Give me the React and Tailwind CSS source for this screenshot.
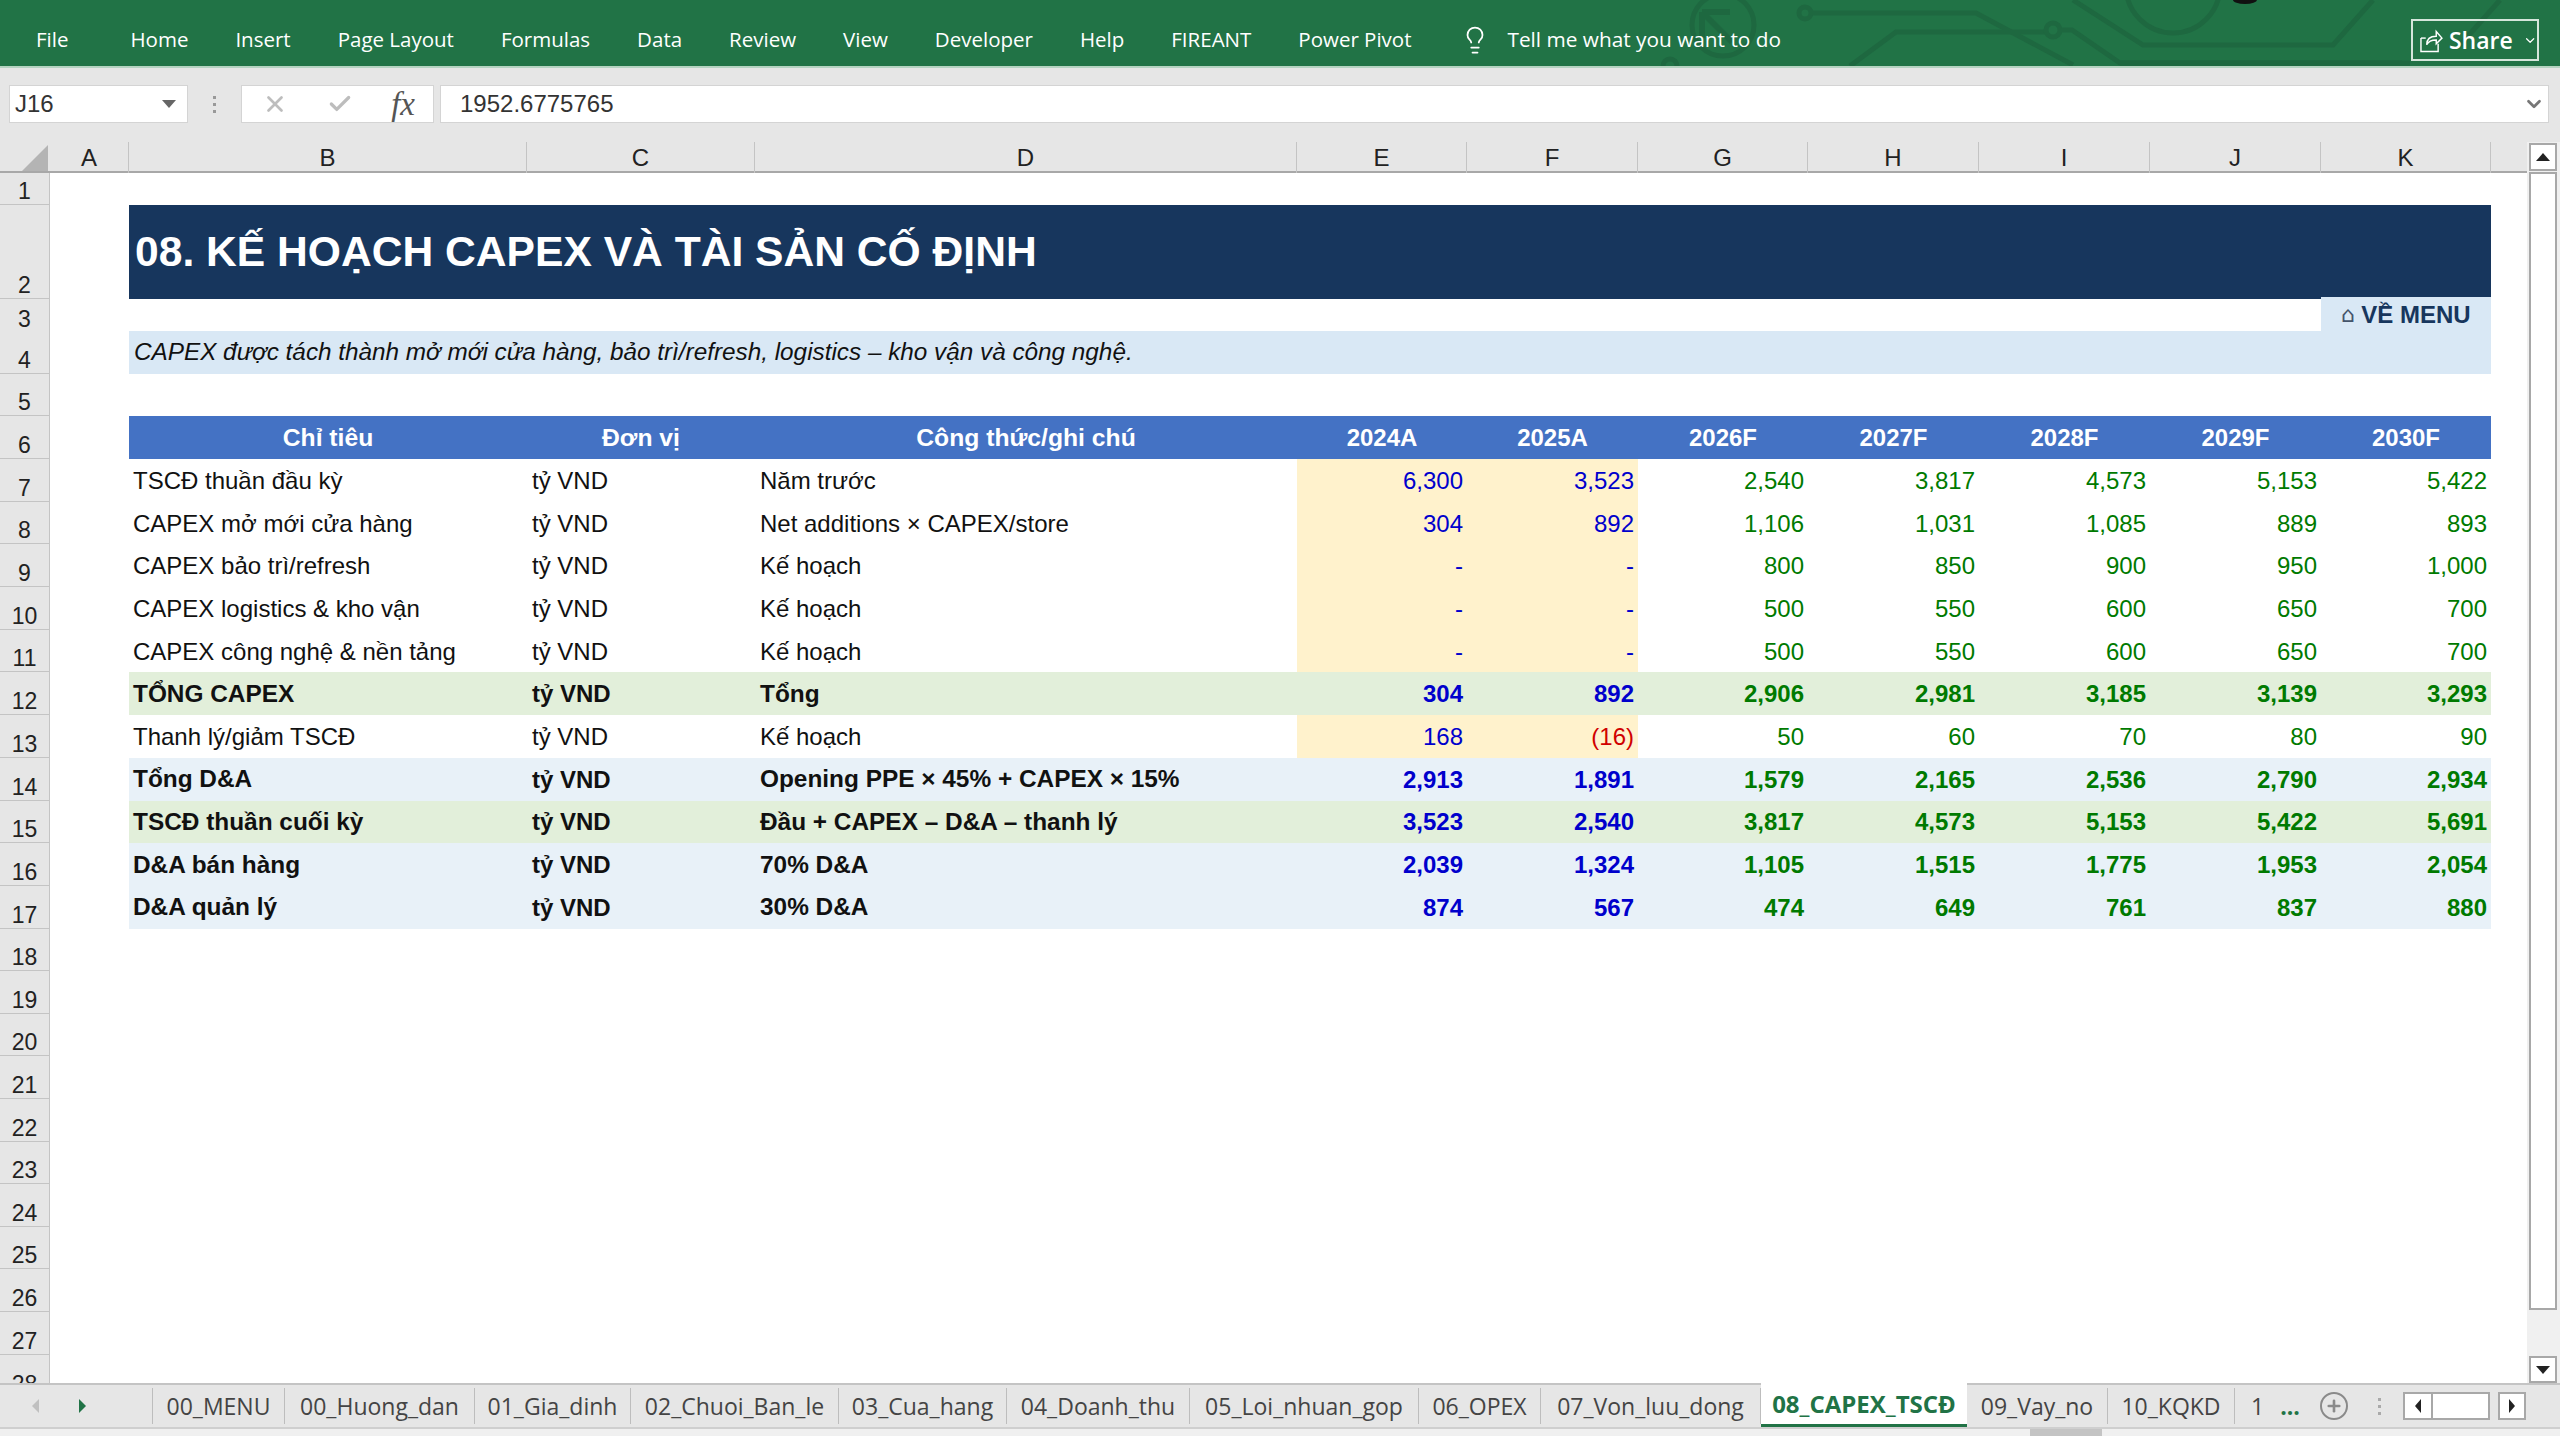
import { Check, ChevronDown, Lightbulb, Plus, X } from 'lucide-react';

const ribbonTabs = ['Home', 'Insert', 'Page Layout', 'Formulas', 'Data', 'Review', 'View', 'Developer', 'Help', 'FIREANT', 'Power Pivot'];

const columns = ['A', 'B', 'C', 'D', 'E', 'F', 'G', 'H', 'I', 'J', 'K'];
const gridCols = 'grid grid-cols-[50px_79px_398px_228px_542px_170px_171px_170px_171px_171px_171px_170px] shrink-0';

const years = ['2024A', '2025A', '2026F', '2027F', '2028F', '2029F', '2030F'];

// kind: plain = white row with yellow actuals, total = green, sub = pale blue
const rows = [
  { n: 7, kind: 'plain', name: 'TSCĐ thuần đầu kỳ', note: 'Năm trước', vals: ['6,300', '3,523', '2,540', '3,817', '4,573', '5,153', '5,422'] },
  { n: 8, kind: 'plain', name: 'CAPEX mở mới cửa hàng', note: 'Net additions × CAPEX/store', vals: ['304', '892', '1,106', '1,031', '1,085', '889', '893'] },
  { n: 9, kind: 'plain', name: 'CAPEX bảo trì/refresh', note: 'Kế hoạch', vals: ['-', '-', '800', '850', '900', '950', '1,000'] },
  { n: 10, kind: 'plain', name: 'CAPEX logistics & kho vận', note: 'Kế hoạch', vals: ['-', '-', '500', '550', '600', '650', '700'] },
  { n: 11, kind: 'plain', name: 'CAPEX công nghệ & nền tảng', note: 'Kế hoạch', vals: ['-', '-', '500', '550', '600', '650', '700'] },
  { n: 12, kind: 'total', name: 'TỔNG CAPEX', note: 'Tổng', vals: ['304', '892', '2,906', '2,981', '3,185', '3,139', '3,293'] },
  { n: 13, kind: 'plain', name: 'Thanh lý/giảm TSCĐ', note: 'Kế hoạch', vals: ['168', '(16)', '50', '60', '70', '80', '90'] },
  { n: 14, kind: 'sub', name: 'Tổng D&A', note: 'Opening PPE × 45% + CAPEX × 15%', vals: ['2,913', '1,891', '1,579', '2,165', '2,536', '2,790', '2,934'] },
  { n: 15, kind: 'total', name: 'TSCĐ thuần cuối kỳ', note: 'Đầu + CAPEX – D&A – thanh lý', vals: ['3,523', '2,540', '3,817', '4,573', '5,153', '5,422', '5,691'] },
  { n: 16, kind: 'sub', name: 'D&A bán hàng', note: '70% D&A', vals: ['2,039', '1,324', '1,105', '1,515', '1,775', '1,953', '2,054'] },
  { n: 17, kind: 'sub', name: 'D&A quản lý', note: '30% D&A', vals: ['874', '567', '474', '649', '761', '837', '880'] },
];

const emptyRows = [18, 19, 20, 21, 22, 23, 24, 25, 26, 27];

const sheetTabs = [
  { label: '00_MENU', w: 'w-[132px]' },
  { label: '00_Huong_dan', w: 'w-[190px]' },
  { label: '01_Gia_dinh', w: 'w-[156px]' },
  { label: '02_Chuoi_Ban_le', w: 'w-[208px]' },
  { label: '03_Cua_hang', w: 'w-[168px]' },
  { label: '04_Doanh_thu', w: 'w-[183px]' },
  { label: '05_Loi_nhuan_gop', w: 'w-[229px]' },
  { label: '06_OPEX', w: 'w-[122px]' },
  { label: '07_Von_luu_dong', w: 'w-[220px]' },
  { label: '08_CAPEX_TSCĐ', w: 'w-[206px]', active: true },
  { label: '09_Vay_no', w: 'w-[141px]' },
  { label: '10_KQKD', w: 'w-[127px]' },
];

function RowNum({ n }) {
  return (
    <div className="h-full bg-[#e6e6e6] border-r border-b border-[#c4c4c4] flex items-end justify-center text-[23px] font-normal leading-[25px] text-[#222]">
      {n}
    </div>
  );
}

function CircuitPattern() {
  return (
    <svg className="absolute left-0 top-0 pointer-events-none" width="2560" height="66" fill="none" stroke="#1e6840" strokeWidth="5">
      <circle cx="1723" cy="25" r="31" />
      <path d="M1702 12h28M1702 12v26M1702 12l30 30" strokeWidth="6" />
      <circle cx="1805" cy="13" r="6" />
      <path d="M1811 13h165l97 52" />
      <circle cx="1670" cy="66" r="7" />
      <path d="M1850 66l46-34h151" />
      <circle cx="2053" cy="30" r="7" />
      <path d="M2060 30h12l48 33h282" />
      <path d="M2120 64h290" strokeWidth="7" />
      <circle cx="2173" cy="-14" r="47" />
      <path d="M2073 0l70 45h190l40-45" />
      <path d="M2500 0l-40 45" />
      <ellipse cx="2245" cy="0" rx="12" ry="4" fill="#111" stroke="none" />
    </svg>
  );
}

function Ribbon() {
  return (
    <div className="relative h-[68px] bg-[#217346] border-b-2 border-[#b5d3c1] shrink-0 flex items-center pt-[13px] font-['Open_Sans',sans-serif] text-[20.5px] text-white overflow-hidden">
      <CircuitPattern />
      <span className="relative ml-[36px] mr-[62px]">File</span>
      <div className="relative flex items-center gap-[47px]">
        {ribbonTabs.map((t) => (
          <span key={t}>{t}</span>
        ))}
      </div>
      <Lightbulb className="relative ml-[49px]" size={30} strokeWidth={1.4} />
      <span className="relative ml-[17px] text-[20.8px]">Tell me what you want to do</span>
      <div className="absolute left-[2411px] top-[19px] w-[128px] h-[42px] border-2 border-[#d5e6dc] flex items-center pl-[7px] gap-[6px]">
        <svg width="24" height="26" viewBox="0 0 24 26" fill="none" stroke="white" strokeWidth="1.5">
          <path d="M1 11v14h18v-8" />
          <path d="M1 11h5" />
          <path d="M7 18c0-6 4-9 10-9V4l6 7-6 6v-4c-4 0-8 1-10 5z" />
        </svg>
        <span className="text-[23px] font-semibold">Share</span>
        <ChevronDown size={15} strokeWidth={2} className="ml-[4px]" />
      </div>
    </div>
  );
}

function FormulaBar() {
  return (
    <div className="h-[74px] bg-[#e6e6e6] shrink-0 pt-[17px] flex items-start font-['Liberation_Sans',sans-serif] text-[24px] text-[#333]">
      <div className="ml-[9px] w-[179px] h-[38px] bg-white border border-[#d4d4d4] flex items-center justify-between pl-[5px] pr-[11px]">
        <span>J16</span>
        <svg width="14" height="8" viewBox="0 0 14 8">
          <path d="M0 0h14L7 8z" fill="#666" />
        </svg>
      </div>
      <div className="ml-[25px] mr-[25px] h-[38px] flex flex-col justify-center gap-[4px]">
        <span className="w-[3px] h-[3px] bg-[#999]" />
        <span className="w-[3px] h-[3px] bg-[#999]" />
        <span className="w-[3px] h-[3px] bg-[#999]" />
      </div>
      <div className="w-[193px] h-[38px] bg-white border border-[#d4d4d4] flex items-center justify-between pl-[20px] pr-[18px]">
        <X size={26} strokeWidth={2.5} className="text-[#bdbdbd]" />
        <Check size={26} strokeWidth={3} className="text-[#bdbdbd]" />
        <span className="font-['Liberation_Serif',serif] italic text-[33px] leading-none text-[#555]">fx</span>
      </div>
      <div className="ml-[6px] w-[2109px] h-[38px] bg-white border border-[#d4d4d4] flex items-center justify-between pl-[19px] pr-[3px]">
        <span>1952.6775765</span>
        <ChevronDown size={22} strokeWidth={3} className="text-[#777]" />
      </div>
    </div>
  );
}

function ColumnHeader() {
  return (
    <div className={`${gridCols} h-[31px] border-b-2 border-[#a8a8a8] bg-[#e6e6e6] text-[24px] leading-[31px] text-[#222]`}>
      <div className="relative">
        <svg className="absolute left-[22px] top-[3px]" width="26" height="26" viewBox="0 0 26 26">
          <path d="M26 0v26H0z" fill="#b4b4b4" />
        </svg>
      </div>
      {columns.map((c) => (
        <div key={c} className="text-center border-r border-[#c4c4c4]">
          {c}
        </div>
      ))}
    </div>
  );
}

function DataRow({ row }) {
  const bg = row.kind === 'total' ? 'bg-[#e2efda]' : row.kind === 'sub' ? 'bg-[#e8f1f8]' : '';
  const bold = row.kind === 'plain' ? '' : 'font-bold';
  const labelSize = row.kind === 'plain' ? 'text-[24px]' : 'text-[24.4px]';

  return (
    <div className={`${gridCols} h-[42.7px] text-[24px] text-[#111]`}>
      <RowNum n={row.n} />
      <div />
      <div className={`${bg} ${bold} ${labelSize} flex items-center pl-[4px] pt-px`}>{row.name}</div>
      <div className={`${bg} ${bold} flex items-center pl-[5px] pt-px`}>tỷ VND</div>
      <div className={`${bg} ${bold} ${labelSize} flex items-center pl-[5px] pt-px`}>{row.note}</div>
      {row.vals.map((v, i) => {
        const actual = i < 2;
        const cellBg = row.kind === 'plain' ? (actual ? 'bg-[#fff2cc]' : '') : bg;
        const color = v === '(16)' ? 'text-[#d00000]' : actual ? 'text-[#0000cc]' : 'text-[#007a00]';
        return (
          <div key={i} className={`${cellBg} ${bold} ${color} flex items-center justify-end pr-[4px] pt-px`}>
            {v}
          </div>
        );
      })}
    </div>
  );
}

function Sheet() {
  return (
    <div className="w-[2527px] flex flex-col overflow-hidden font-['Liberation_Sans',sans-serif]">
      <ColumnHeader />

      <div className={`${gridCols} h-[32px]`}>
        <RowNum n={1} />
      </div>

      <div className={`${gridCols} h-[94px]`}>
        <RowNum n={2} />
        <div />
        <div className="col-span-10 bg-[#17365d] flex items-center pl-[6px] text-[42.6px] font-bold text-white">
          08. KẾ HOẠCH CAPEX VÀ TÀI SẢN CỐ ĐỊNH
        </div>
      </div>

      <div className={`${gridCols} h-[32px]`}>
        <RowNum n={3} />
        <div className="relative col-start-12 -mt-[2px] bg-[#d9e8f5] flex items-center justify-center gap-[6px] text-[24px] font-bold text-[#17365d]">
          <span className="font-['DejaVu_Sans',sans-serif] font-normal text-[22px] leading-none text-[#44546a]">⌂</span>
          VỀ MENU
        </div>
      </div>

      <div className={`${gridCols} h-[42.5px]`}>
        <RowNum n={4} />
        <div />
        <div className="col-span-10 bg-[#d9e8f5] flex items-center pl-[5px] text-[24.3px] italic text-[#111]">
          CAPEX được tách thành mở mới cửa hàng, bảo trì/refresh, logistics – kho vận và công nghệ.
        </div>
      </div>

      <div className={`${gridCols} h-[42.5px]`}>
        <RowNum n={5} />
      </div>

      <div className={`${gridCols} h-[43px] text-[24px] font-bold text-white`}>
        <RowNum n={6} />
        <div />
        <div className="bg-[#4472c4] flex items-center justify-center text-[24.7px]">Chỉ tiêu</div>
        <div className="bg-[#4472c4] flex items-center justify-center text-[24.7px]">Đơn vị</div>
        <div className="bg-[#4472c4] flex items-center justify-center text-[24.7px]">Công thức/ghi chú</div>
        {years.map((y) => (
          <div key={y} className="bg-[#4472c4] flex items-center justify-center">
            {y}
          </div>
        ))}
      </div>

      {rows.map((r) => (
        <DataRow key={r.n} row={r} />
      ))}

      {emptyRows.map((n) => (
        <div key={n} className={`${gridCols} h-[42.6px]`}>
          <RowNum n={n} />
        </div>
      ))}

      <div className={`${gridCols} h-[43px]`}>
        <RowNum n={28} />
      </div>
    </div>
  );
}

function VerticalScrollbar() {
  return (
    <div className="w-[33px] bg-[#f0f0f0] flex flex-col pl-[2px] pr-[3px] pt-[1px]">
      <div className="h-[28px] bg-white border-2 border-[#a8a8a8] flex items-center justify-center">
        <span className="w-0 h-0 border-x-[7px] border-x-transparent border-b-[8px] border-b-[#222]" />
      </div>
      <div className="h-[1138px] mt-[1px] bg-white border-2 border-[#a8a8a8]" />
      <div className="flex-1" />
      <div className="h-[27px] bg-white border-2 border-[#a8a8a8] flex items-center justify-center">
        <span className="w-0 h-0 border-x-[7px] border-x-transparent border-t-[8px] border-t-[#222]" />
      </div>
    </div>
  );
}

function TabBar() {
  return (
    <div className="relative h-[46px] bg-[#e6e6e6] border-t-2 border-[#c4c4c4] border-b-2 border-b-[#cfcfcf] shrink-0 flex items-stretch font-['Open_Sans',sans-serif] text-[23px] text-[#444]">
      <div className="w-[153px] flex items-center border-r border-[#bdbdbd] my-[3px] pl-[32px] gap-[40px]">
        <span className="w-0 h-0 border-y-[7px] border-y-transparent border-r-[7px] border-r-[#c0c0c0]" />
        <span className="w-0 h-0 border-y-[7px] border-y-transparent border-l-[7px] border-l-[#217346]" />
      </div>
      {sheetTabs.map((t) =>
        t.active ? (
          <div
            key={t.label}
            className={`${t.w} -mt-[2px] bg-white border-b-[3px] border-[#217346] flex items-center justify-center font-bold text-[#217346] text-[24px]`}
          >
            {t.label}
          </div>
        ) : (
          <div key={t.label} className={`${t.w} my-[3px] border-r border-[#bdbdbd] flex items-center justify-center`}>
            {t.label}
          </div>
        )
      )}
      <span className="ml-[16px] flex items-center">1</span>
      <span className="ml-[16px] flex items-center font-bold text-[#217346]">...</span>
      <div className="ml-[20px] my-auto w-[28px] h-[28px] rounded-full border-2 border-[#8a8a8a] flex items-center justify-center">
        <Plus size={18} strokeWidth={3.5} className="text-[#8a8a8a]" />
      </div>
      <div className="ml-[30px] my-auto flex flex-col gap-[4px]">
        <span className="w-[3px] h-[3px] bg-[#aaa]" />
        <span className="w-[3px] h-[3px] bg-[#aaa]" />
        <span className="w-[3px] h-[3px] bg-[#aaa]" />
      </div>
      <div className="ml-[22px] my-auto flex h-[28px]">
        <div className="w-[30px] bg-white border-2 border-[#a8a8a8] flex items-center justify-center">
          <span className="w-0 h-0 border-y-[7px] border-y-transparent border-r-[6px] border-r-[#222]" />
        </div>
        <div className="w-[57px] bg-white border-2 border-l-0 border-[#a8a8a8]" />
        <div className="ml-[8px] w-[28px] bg-white border-2 border-[#a8a8a8] flex items-center justify-center">
          <span className="w-0 h-0 border-y-[7px] border-y-transparent border-l-[6px] border-l-[#222]" />
        </div>
      </div>
    </div>
  );
}

export default function App() {
  return (
    <div className="w-[2560px] h-[1436px] flex flex-col bg-white overflow-hidden">
      <Ribbon />
      <FormulaBar />

      <div className="flex h-[1241px] shrink-0">
        <Sheet />
        <VerticalScrollbar />
      </div>

      <TabBar />

      {/* Strip under the tabs */}
      <div className="flex-1 bg-[#f0f0f0] pl-[2030px]">
        <div className="w-[72px] h-full bg-[#c4c4c4]" />
      </div>
    </div>
  );
}
